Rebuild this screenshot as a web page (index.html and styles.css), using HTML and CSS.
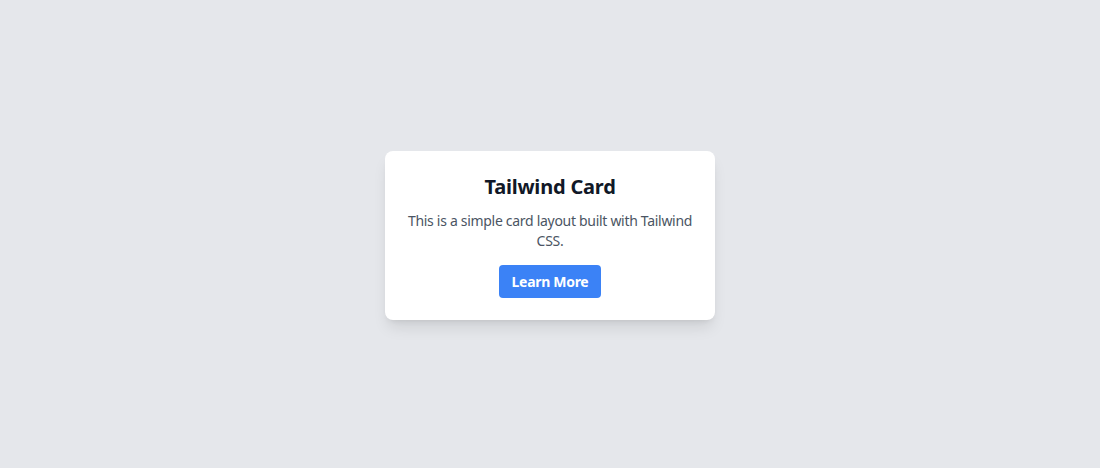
FILE: index.html
```html
<!DOCTYPE html>
<html lang="en">
<head>
    <meta charset="UTF-8">
    <meta name="viewport" content="width=device-width, initial-scale=1.0">
    <title>Tailwind Card</title>
    <link rel="stylesheet" href="styles.css">
</head>
<body>
    <div class="card">
        <h2>Tailwind Card</h2>
        <p>This is a simple card layout built with Tailwind CSS.</p>
        <button class="btn">Learn More</button>
    </div>
</body>
</html>
```

FILE: styles.css
```css
* {
    margin: 0;
    padding: 0;
    box-sizing: border-box;
    font-family: 'Noto Sans', 'Open Sans', sans-serif;
}

body {
    background-color: #e5e7eb;
    min-height: 100vh;
    padding-top: 2px;
    display: flex;
    justify-content: center;
    align-items: center;
}

.card {
    width: 330px;
    background-color: #fff;
    border-radius: 8px;
    padding: 23px 24px 22px;
    text-align: center;
    box-shadow: 0 10px 15px -3px rgba(0, 0, 0, 0.1), 0 4px 6px -4px rgba(0, 0, 0, 0.1);
}

.card h2 {
    font-size: 20px;
    line-height: 26px;
    font-weight: 700;
    color: #111827;
    letter-spacing: -0.2px;
    margin-bottom: 11px;
}

.card p {
    font-size: 14px;
    line-height: 20px;
    color: #4b5563;
    letter-spacing: -0.3px;
    margin: 0 -4px 14px;
}

.btn {
    background-color: #3b82f6;
    color: #fff;
    font-size: 14px;
    font-weight: 700;
    line-height: 17px;
    letter-spacing: -0.3px;
    padding: 8px 13px;
    border: none;
    border-radius: 4px;
    cursor: pointer;
}
```
